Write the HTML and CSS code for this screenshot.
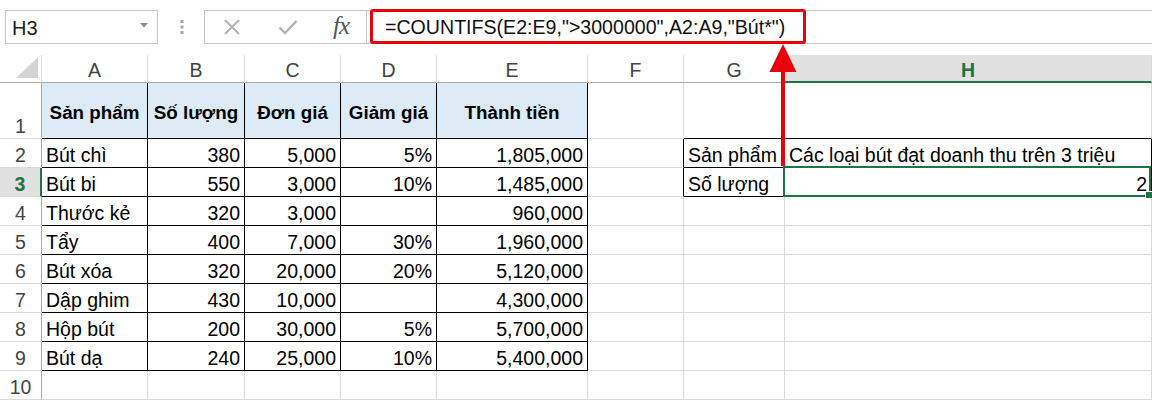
FILE: index.html
```html
<!DOCTYPE html>
<html lang="vi">
<head>
<meta charset="utf-8">
<title>COUNTIFS</title>
<link rel="stylesheet" href="styles.css">
</head>
<body>
<div class="app">
  <div class="toolbar">
    <div class="namebox">
      <span class="namebox-text">H3</span>
      <svg class="caret" width="8" height="5" viewBox="0 0 8 5"><path d="M0 0H8L4 4.5Z" fill="#8a8a8a"/></svg>
    </div>
    <div class="grip">
      <svg width="4" height="14" viewBox="0 0 4 14"><rect x="0.5" y="0" width="3" height="3" fill="#a6a6a6"/><rect x="0.5" y="5.5" width="3" height="3" fill="#a6a6a6"/><rect x="0.5" y="11" width="3" height="3" fill="#a6a6a6"/></svg>
    </div>
    <div class="fxbox">
      <svg class="ico ico-x" width="18" height="18" viewBox="0 0 18 18"><path d="M2 2L16 16M16 2L2 16" stroke="#b3b3b3" stroke-width="2" fill="none"/></svg>
      <svg class="ico ico-ok" width="20" height="16" viewBox="0 0 20 16"><path d="M1.5 8.5L7 14L18.5 2" stroke="#b3b3b3" stroke-width="2.4" fill="none"/></svg>
      <span class="fx">fx</span>
    </div>
    <div class="formula">=COUNTIFS(E2:E9,"&gt;3000000",A2:A9,"Bút*")</div>
  </div>

  <div class="sheet">
    <!-- column headers -->
    <div class="ch corner"><svg width="22" height="21" viewBox="0 0 22 21"><path d="M22 0V21H0Z" fill="#d4d4d4"/></svg></div>
    <div class="ch">A</div>
    <div class="ch">B</div>
    <div class="ch">C</div>
    <div class="ch">D</div>
    <div class="ch">E</div>
    <div class="ch">F</div>
    <div class="ch">G</div>
    <div class="ch ch-sel">H</div>

    <!-- row 1 -->
    <div class="rh">1</div>
    <div class="c t th">Sản phẩm</div>
    <div class="c t th">Số lượng</div>
    <div class="c t th">Đơn giá</div>
    <div class="c t th">Giảm giá</div>
    <div class="c t th">Thành tiền</div>
    <div class="c"></div>
    <div class="c bb"></div>
    <div class="c bb"></div>

    <!-- row 2 -->
    <div class="rh">2</div>
    <div class="c t">Bút chì</div>
    <div class="c t n">380</div>
    <div class="c t n">5,000</div>
    <div class="c t n">5%</div>
    <div class="c t n">1,805,000</div>
    <div class="c br"></div>
    <div class="c t">Sản phẩm</div>
    <div class="c t">Các loại bút đạt doanh thu trên 3 triệu</div>

    <!-- row 3 -->
    <div class="rh rh-sel">3</div>
    <div class="c t">Bút bi</div>
    <div class="c t n">550</div>
    <div class="c t n">3,000</div>
    <div class="c t n">10%</div>
    <div class="c t n">1,485,000</div>
    <div class="c br"></div>
    <div class="c t">Số lượng</div>
    <div class="c t n active">2<span class="sel"><span class="handle"></span></span></div>

    <!-- row 4 -->
    <div class="rh">4</div>
    <div class="c t">Thước kẻ</div>
    <div class="c t n">320</div>
    <div class="c t n">3,000</div>
    <div class="c t n"></div>
    <div class="c t n">960,000</div>
    <div class="c"></div>
    <div class="c"></div>
    <div class="c"></div>

    <!-- row 5 -->
    <div class="rh">5</div>
    <div class="c t">Tẩy</div>
    <div class="c t n">400</div>
    <div class="c t n">7,000</div>
    <div class="c t n">30%</div>
    <div class="c t n">1,960,000</div>
    <div class="c"></div>
    <div class="c"></div>
    <div class="c"></div>

    <!-- row 6 -->
    <div class="rh">6</div>
    <div class="c t">Bút xóa</div>
    <div class="c t n">320</div>
    <div class="c t n">20,000</div>
    <div class="c t n">20%</div>
    <div class="c t n">5,120,000</div>
    <div class="c"></div>
    <div class="c"></div>
    <div class="c"></div>

    <!-- row 7 -->
    <div class="rh">7</div>
    <div class="c t">Dập ghim</div>
    <div class="c t n">430</div>
    <div class="c t n">10,000</div>
    <div class="c t n"></div>
    <div class="c t n">4,300,000</div>
    <div class="c"></div>
    <div class="c"></div>
    <div class="c"></div>

    <!-- row 8 -->
    <div class="rh">8</div>
    <div class="c t">Hộp bút</div>
    <div class="c t n">200</div>
    <div class="c t n">30,000</div>
    <div class="c t n">5%</div>
    <div class="c t n">5,700,000</div>
    <div class="c"></div>
    <div class="c"></div>
    <div class="c"></div>

    <!-- row 9 -->
    <div class="rh">9</div>
    <div class="c t">Bút dạ</div>
    <div class="c t n">240</div>
    <div class="c t n">25,000</div>
    <div class="c t n">10%</div>
    <div class="c t n">5,400,000</div>
    <div class="c"></div>
    <div class="c"></div>
    <div class="c"></div>

    <!-- row 10 -->
    <div class="rh">10</div>
    <div class="c"></div>
    <div class="c"></div>
    <div class="c"></div>
    <div class="c"></div>
    <div class="c"></div>
    <div class="c"></div>
    <div class="c"></div>
    <div class="c"></div>
  </div>

  <div class="callout"></div>
  <svg class="arrow" width="40" height="130" viewBox="0 0 40 130">
    <path d="M19 0L5.5 28H32.5Z" fill="#e8000f"/>
    <rect x="17" y="26" width="4" height="96" fill="#e8000f"/>
  </svg>
</div>
</body>
</html>
```
FILE: styles.css
```css
html, body {
  margin: 0;
  padding: 0;
  overflow: hidden;
  background: #ffffff;
}

.app {
  position: relative;
  width: 1152px;
  height: 402px;
  overflow: hidden;
  font-family: "Liberation Sans", Arial, sans-serif;
  font-size: 19.5px;
  color: #000;
}

/* ---------- formula bar ---------- */
.toolbar {
  display: flex;
  height: 34px;
  margin-top: 10px;
}

.namebox {
  box-sizing: border-box;
  width: 153px;
  margin-left: 5px;
  border: 1px solid #c6c6c6;
  display: flex;
  align-items: center;
  justify-content: space-between;
  padding: 0 9px 0 6px;
  color: #222;
}

.namebox-text {
  font-size: 20px;
  line-height: 22px;
  padding-top: 1px;
}

.caret {
  margin-top: -3px;
}

.grip {
  width: 46px;
  display: flex;
  align-items: center;
  justify-content: center;
  padding-left: 1px;
  box-sizing: border-box;
}

.fxbox {
  box-sizing: border-box;
  width: 163px;
  border: 1px solid #c6c6c6;
  display: flex;
  align-items: center;
  padding-left: 18px;
}

.ico-x {
  margin-right: 37px;
}

.ico-ok {
  margin-right: 35px;
}

.fx {
  font-family: "Liberation Serif", "Times New Roman", serif;
  font-style: italic;
  font-size: 25px;
  color: #555;
  letter-spacing: -1px;
  margin-top: -3px;
}

.formula {
  flex: 1;
  box-sizing: border-box;
  border-top: 1px solid #c6c6c6;
  border-bottom: 1px solid #c6c6c6;
  display: flex;
  align-items: center;
  padding-left: 18px;
  font-size: 19.6px;
  color: #111;
  white-space: nowrap;
}

/* ---------- grid ---------- */
.sheet {
  margin-top: 11px;
  display: grid;
  grid-template-columns: 42px 106px 97px 96px 96px 151px 96px 101px 367px;
  grid-template-rows: 28px 56px repeat(9, 29px) 30px;
}

.ch {
  box-sizing: border-box;
  border-right: 1px solid #dadada;
  border-bottom: 1px solid #ababab;
  display: flex;
  align-items: center;
  justify-content: center;
  color: #444;
  padding-top: 3px;
  line-height: 22px;
}

.corner {
  justify-content: flex-end;
  align-items: flex-end;
  padding: 0 3px 4px 0;
}

.corner svg {
  display: block;
}

.ch-sel {
  background: #e1e1e1;
  border-bottom: 2px solid #217346;
  color: #217346;
  font-weight: bold;
  padding-top: 4px;
}

.rh {
  box-sizing: border-box;
  border-right: 1px solid #ababab;
  border-bottom: 1px solid #dadada;
  display: flex;
  align-items: flex-end;
  justify-content: center;
  color: #444;
  line-height: 22px;
  padding-bottom: 1px;
}

.rh-sel {
  background: #e1e1e1;
  border-right: 2px solid #217346;
  color: #217346;
  font-weight: bold;
}

.c {
  box-sizing: border-box;
  border-right: 1px solid #dadada;
  border-bottom: 1px solid #dadada;
  display: flex;
  align-items: flex-end;
  padding: 0 4px 1px 4px;
  line-height: 22px;
  white-space: nowrap;
}

.c.t {
  border-right-color: #000;
  border-bottom-color: #000;
}

.c.n {
  justify-content: flex-end;
}

.c.th {
  background: #ddebf7;
  font-weight: bold;
  font-size: 18.8px;
  justify-content: center;
  align-items: center;
  padding: 4px 0 0 0;
}

.c.br {
  border-right-color: #000;
}

.c.bb {
  border-bottom-color: #000;
}

.c.active {
  position: relative;
}

.sel {
  position: absolute;
  left: -2px;
  top: -2px;
  right: 0;
  bottom: -1px;
  border: 2px solid #217346;
  pointer-events: none;
}

.handle {
  position: absolute;
  right: -4px;
  bottom: -4px;
  width: 6px;
  height: 6px;
  background: #217346;
  border: 1px solid #fff;
}

/* ---------- annotation ---------- */
.callout {
  position: absolute;
  left: 370px;
  top: 9px;
  width: 436px;
  height: 35px;
  box-sizing: border-box;
  border: 3px solid #e8000f;
  border-radius: 3px;
}

.arrow {
  position: absolute;
  left: 764px;
  top: 44px;
  display: block;
}
```
